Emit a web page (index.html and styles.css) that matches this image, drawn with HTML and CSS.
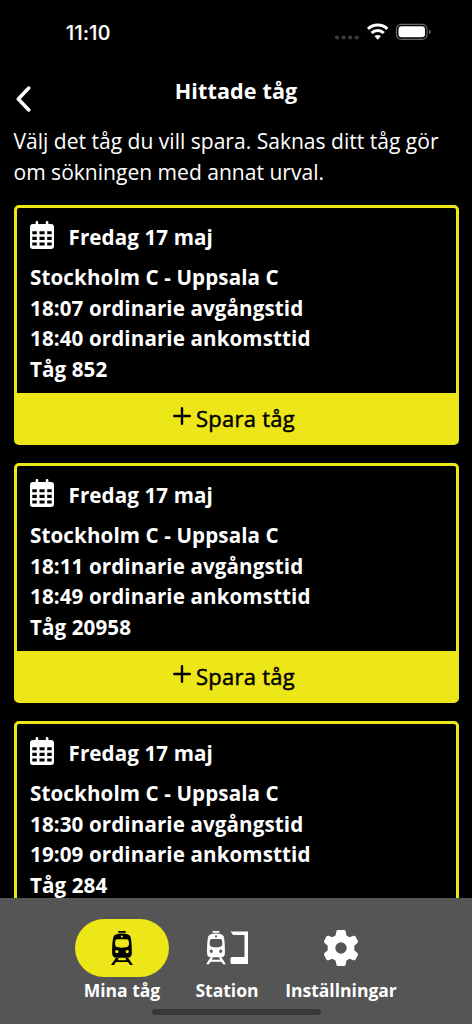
FILE: index.html
```html
<!DOCTYPE html>
<html lang="sv">
<head>
<meta charset="utf-8">
<title>Hittade tåg</title>
<link rel="stylesheet" href="styles.css">
</head>
<body>
<svg class="defs" width="0" height="0" aria-hidden="true">
  <symbol id="calendar" viewBox="0 0 24 28">
    <path fill-rule="evenodd" d="M5.6 1.2a1.3 1.3 0 0 1 2.6 0V3h7.6V1.2a1.3 1.3 0 0 1 2.6 0V3H21a3 3 0 0 1 3 3v19a3 3 0 0 1-3 3H3a3 3 0 0 1-3-3V6a3 3 0 0 1 3-3h2.600zM2.300 10.300v2.900h4.500v-2.900zM9.500 10.300v2.900h5.100v-2.900zM17.200 10.300v2.900h4.500v-2.900zM2.300 15.700v3.400h4.500v-3.400zM9.500 15.700v3.400h5.100v-3.400zM17.200 15.700v3.400h4.500v-3.400zM2.300 21.500v3h4.500v-3zM9.500 21.500v3h5.100v-3zM17.200 21.500v3h4.500v-3z"/>
  </symbol>
  <symbol id="plus" viewBox="0 0 18 18"><path d="M9 1.200v15.600M1.200 9h15.600" fill="none" stroke="currentColor" stroke-width="2.4" stroke-linecap="round"/></symbol>
  <symbol id="train" viewBox="0 0 22 34" preserveAspectRatio="none">
    <path fill-rule="evenodd" d="M8 0h6q1 .2 1 1.700H7Q7 .2 8 0zM11 2.600c4 0 7.300.8 8.300 2.600C20.400 8 21 15 20.800 22.500c0 2.500-1.500 4.200-4 4.200H5.200c-2.500 0-4-1.700-4-4.200C1 15 1.600 8 2.700 5.200 3.700 3.400 7 2.600 11 2.600zM11 4.400a1.100 1.100 0 1 0 0 2.200 1.100 1.100 0 0 0 0-2.200zM6 8.200Q4.500 8.200 4.300 9.800L4 13q0 2.800 3 3.300 4 .7 8 0 3-.5 3-3.300l-.3-3.200Q17.500 8.200 16 8.200zM5.800 18.900a1.700 1.700 0 1 0 0 3.400 1.700 1.700 0 0 0 0-3.400zM16.200 18.900a1.700 1.700 0 1 0 0 3.400 1.700 1.700 0 0 0 0-3.400zM4.800 27h3L6.500 29.300h9L14.200 27h3L22 34h-3l-2-2.900H5L3 34H0z"/>
  </symbol>
</svg>
<div class="app">
  <div class="status">
    <span class="clock">11:10</span>
    <svg class="signals" width="98" height="20" viewBox="0 0 98 20">
      <g fill="#3b3b3b"><circle cx="3" cy="15.500" r="2.100"/><circle cx="9.600" cy="15.500" r="2.100"/><circle cx="16.200" cy="15.500" r="2.100"/><circle cx="22.700" cy="15.500" r="2.100"/></g>
      <g fill="none" stroke="#fff" stroke-width="3"><path d="M34 6.800a14.500 14.500 0 0 1 19.400 0"/><path d="M37.600 11a9 9 0 0 1 12.200 0"/></g>
      <path d="M40.500 14.200q3.200-2.400 6.400 0l-3.200 3.600z" fill="#fff"/>
      <rect x="62.500" y="2.300" width="30.500" height="15" rx="4.800" fill="none" stroke="#686868" stroke-width="1.200"/>
      <rect x="64.500" y="4.300" width="26.500" height="11" rx="3" fill="#fff"/>
      <path d="M95 7.800q1.800.6 1.800 2.200T95 12.200z" fill="#686868"/>
    </svg>
  </div>
  <header class="header">
    <svg class="back" width="18" height="28" viewBox="0 0 18 28"><path d="M15.800 3 5.300 14l10.500 11" fill="none" stroke="#fff" stroke-width="3.500" stroke-linecap="round" stroke-linejoin="round"/></svg>
    <h1>Hittade tåg</h1>
  </header>
  <p class="intro">Välj det tåg du vill spara. Saknas ditt tåg gör<br>om sökningen med annat urval.</p>
  <main class="list">
    <article class="card">
      <div class="date"><svg class="calendar"><use href="#calendar"/></svg><span>Fredag 17 maj</span></div>
      <div class="info"><div class="route">Stockholm C - Uppsala C</div><div class="departure">18:07 ordinarie avgångstid</div><div class="arrival">18:40 ordinarie ankomsttid</div><div class="number">Tåg 852</div></div>
      <button class="save"><svg class="plus"><use href="#plus"/></svg><span>Spara tåg</span></button>
    </article>
    <article class="card">
      <div class="date"><svg class="calendar"><use href="#calendar"/></svg><span>Fredag 17 maj</span></div>
      <div class="info"><div class="route">Stockholm C - Uppsala C</div><div class="departure">18:11 ordinarie avgångstid</div><div class="arrival">18:49 ordinarie ankomsttid</div><div class="number">Tåg 20958</div></div>
      <button class="save"><svg class="plus"><use href="#plus"/></svg><span>Spara tåg</span></button>
    </article>
    <article class="card">
      <div class="date"><svg class="calendar"><use href="#calendar"/></svg><span>Fredag 17 maj</span></div>
      <div class="info"><div class="route">Stockholm C - Uppsala C</div><div class="departure">18:30 ordinarie avgångstid</div><div class="arrival">19:09 ordinarie ankomsttid</div><div class="number">Tåg 284</div></div>
    </article>
  </main>
  <nav class="tabs">
    <div class="tab tab-trains"><div class="pill active"><svg width="22" height="34"><use href="#train"/></svg></div><span>Mina tåg</span></div>
    <div class="tab tab-station"><div class="pill"><svg width="42" height="34" viewBox="0 0 42 34"><use href="#train" width="20" height="33.500"/><path d="M24.500.5H42V33H26q-1.500 0-1.500-1.500v-4q0-1.500 1.500-1.500h12.500V4H27z"/></svg></div><span>Station</span></div>
    <div class="tab tab-settings"><div class="pill"><svg width="34" height="36" viewBox="0 0 34 36"><path fill-rule="evenodd" d="M14 0h6q1.300 0 1.600 1.300l.9 4.200q1.500.6 2.900 1.700l4.200-1.400q1.300-.3 2 .8l2.200 4.200q.5 1.200-.4 2.100l-3.200 2.900q.3 2.200 0 4.400l3.200 2.900q.9.900.4 2.100l-2.200 4.200q-.7 1.100-2 .8l-4.200-1.400q-1.400 1.100-2.900 1.700l-.9 4.200Q21.300 36 20 36h-6q-1.300 0-1.600-1.300l-.9-4.200q-1.500-.6-2.900-1.700l-4.200 1.400q-1.300.3-2-.8L.2 25.200q-.5-1.200.4-2.100l3.200-2.900q-.3-2.200 0-4.400L.6 12.900q-.9-.9-.4-2.100l2.200-4.200q.7-1.100 2-.8l4.200 1.400q1.400-1.100 2.900-1.700l.9-4.200Q12.700 0 14 0zM17 12.300a5.700 5.700 0 1 0 0 11.400 5.700 5.700 0 0 0 0-11.400z"/></svg></div><span>Inställningar</span></div>
    <div class="home"></div>
  </nav>
</div>
</body>
</html>
```
FILE: styles.css
```css
* { box-sizing: border-box; }
body { margin: 0; background: #000; color: #fff; font-family: "Open Sans", sans-serif; }
svg { display: block; fill: currentColor; flex: none; }
.defs { position: absolute; }
.app { width: 472px; height: 1024px; display: flex; flex-direction: column; overflow: hidden; }
.status { flex: none; height: 65px; padding: 22px 40px 0 66px; display: flex; justify-content: space-between; align-items: flex-start; }
.clock { font: 500 19.500px/22px Inter, sans-serif; letter-spacing: .4px; -webkit-text-stroke: .2px; }
.header { flex: none; height: 61px; padding: 10px 13px 0; display: grid; grid-template-columns: 18px 1fr 18px; }
.back { margin-top: 10px; }
h1 { margin: 0; font-size: 21.600px; line-height: 31px; font-weight: 700; letter-spacing: .1px; text-align: center; }
.intro { flex: none; margin: 0; padding-left: 13.500px; height: 79px; font-size: 21.050px; line-height: 30.700px; font-weight: 400; white-space: nowrap; }
.list { flex: 1; min-height: 0; overflow: hidden; padding: 0 13.500px; display: flex; flex-direction: column; gap: 18px; }
.card { flex: none; height: 240px; border: 3px solid #ede618; border-radius: 5px; padding: 13px 0 0; display: flex; flex-direction: column; }
.date { height: 41px; padding-left: 13.500px; display: flex; gap: 14.500px; font-size: 20.600px; line-height: 33px; font-weight: 700; letter-spacing: .1px; }
.calendar { width: 24px; height: 28px; }
.info { padding-left: 13.500px; font-size: 20.600px; line-height: 30.700px; font-weight: 700; letter-spacing: .1px; white-space: nowrap; }
.save { margin: auto 0 0; height: 49px; border: 0; background: #ede618; color: #000; display: flex; justify-content: center; align-items: center; gap: 5px; font: 400 22px/30px "Open Sans", sans-serif; letter-spacing: .25px; -webkit-text-stroke: .45px; padding: 0 4px 0 0; }
.plus { width: 18px; height: 18px; margin-top: -4px; }
.tabs { flex: none; height: 126px; background: #555; padding: 21px 65px 0 75px; display: grid; grid-template-columns: 94px 116px 112px; position: relative; }
.tab { display: flex; flex-direction: column; align-items: center; font-size: 17.500px; line-height: 26px; font-weight: 700; white-space: nowrap; }
.pill { width: 94px; height: 58px; border-radius: 29px; display: flex; justify-content: center; align-items: center; }
.active { background: #ede618; color: #000; }
.home { position: absolute; left: 152px; top: 111px; width: 169px; height: 6px; border-radius: 3px; background: #383838; }
```
